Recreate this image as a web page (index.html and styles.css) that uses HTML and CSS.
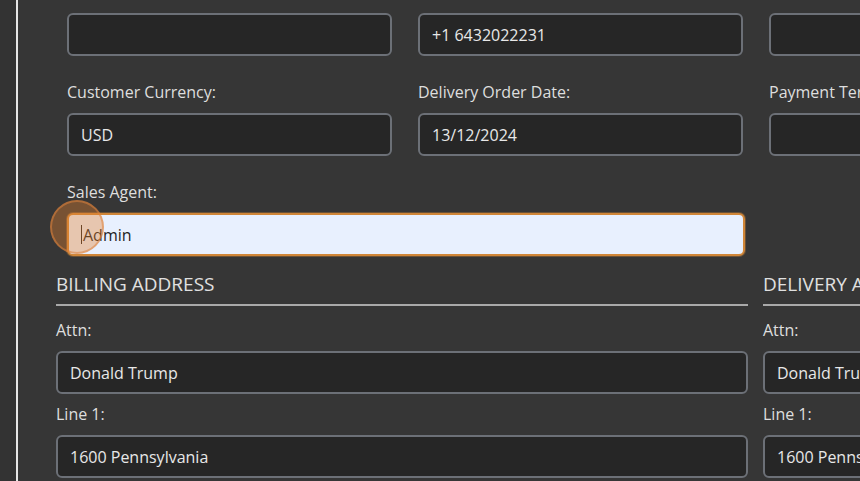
FILE: index.html
```html
<!DOCTYPE html>
<html lang="en">
<head>
<meta charset="utf-8">
<title>Order</title>
<link rel="stylesheet" href="styles.css">
</head>
<body>
<div class="app">
  <aside class="rail"></aside>
  <main class="main">
    <section class="top-grid">
      <div class="field"><div class="box"></div></div>
      <div class="field"><div class="box">+1 6432022231</div></div>
      <div class="field"><div class="box"></div></div>

      <div class="field"><label class="label">Customer Currency:</label><div class="box">USD</div></div>
      <div class="field"><label class="label">Delivery Order Date:</label><div class="box">13/12/2024</div></div>
      <div class="field"><label class="label">Payment Terms:</label><div class="box"></div></div>

      <div class="field span2"><label class="label">Sales Agent:</label><div class="box focus"><span class="caret"></span>Admin</div></div>
    </section>

    <section class="addresses">
      <div class="address">
        <h2 class="heading">BILLING ADDRESS</h2>
        <div class="afield"><label class="label">Attn:</label><div class="box">Donald Trump</div></div>
        <div class="afield"><label class="label">Line 1:</label><div class="box">1600 Pennsylvania</div></div>
      </div>
      <div class="address">
        <h2 class="heading">DELIVERY ADDRESS</h2>
        <div class="afield"><label class="label">Attn:</label><div class="box">Donald Trump</div></div>
        <div class="afield"><label class="label">Line 1:</label><div class="box">1600 Pennsylvania</div></div>
      </div>
    </section>
  </main>
</div>
<div class="click-dot"></div>
</body>
</html>
```
FILE: styles.css
```css
html, body {
  margin: 0;
  padding: 0;
  width: 860px;
  height: 481px;
  overflow: hidden;
  background: #363636;
  font-family: "Open Sans", "Noto Sans", sans-serif;
  font-size: 16px;
  color: #e2e2e2;
}
.app {
  display: flex;
  height: 481px;
}
.rail {
  width: 16px;
  flex: 0 0 16px;
  background: #333333;
  border-right: 2px solid #e6e6e6;
}
.main {
  flex: 1;
  min-width: 0;
  padding: 13px 0 0 38px;
  overflow: hidden;
}
.top-grid {
  display: grid;
  grid-template-columns: 325px 325px 325px;
  column-gap: 26px;
  row-gap: 24px;
  padding-left: 11px;
  width: 1100px;
}
.field {
  display: flex;
  flex-direction: column;
}
.field.span2 {
  grid-column: span 2;
  margin-right: -2px;
}
.label {
  display: block;
  line-height: 24px;
  margin-bottom: 9px;
  color: #dedede;
}
.box {
  box-sizing: border-box;
  height: 43px;
  border: 2px solid #6c7077;
  border-radius: 6px;
  background: #262626;
  padding: 0 12px;
  display: flex;
  align-items: center;
  color: #e8e8e8;
  white-space: nowrap;
  overflow: hidden;
}
.box.focus {
  background: #e8f0fe;
  border-color: #d08638;
  color: #1e1e1e;
  box-shadow: 0 0 0 1px rgba(208,134,56,0.35);
}
.caret {
  display: inline-block;
  width: 1px;
  height: 19px;
  background: #222;
  margin-right: 1px;
}
.addresses {
  display: grid;
  grid-template-columns: 692px 692px;
  column-gap: 15px;
  margin-top: 14px;
  width: 1400px;
}
.heading {
  margin: 0 0 12px;
  font-size: 19px;
  font-weight: 400;
  line-height: 28px;
  padding-bottom: 6px;
  border-bottom: 2px solid #a9a9a9;
  color: #e0e0e0;
}
.afield {
  margin-bottom: 8px;
}
.click-dot {
  position: absolute;
  left: 50px;
  top: 200px;
  width: 50px;
  height: 50px;
  border-radius: 50%;
  background: rgba(230, 128, 48, 0.38);
  border: 2px solid rgba(220, 130, 60, 0.55);
}
```
